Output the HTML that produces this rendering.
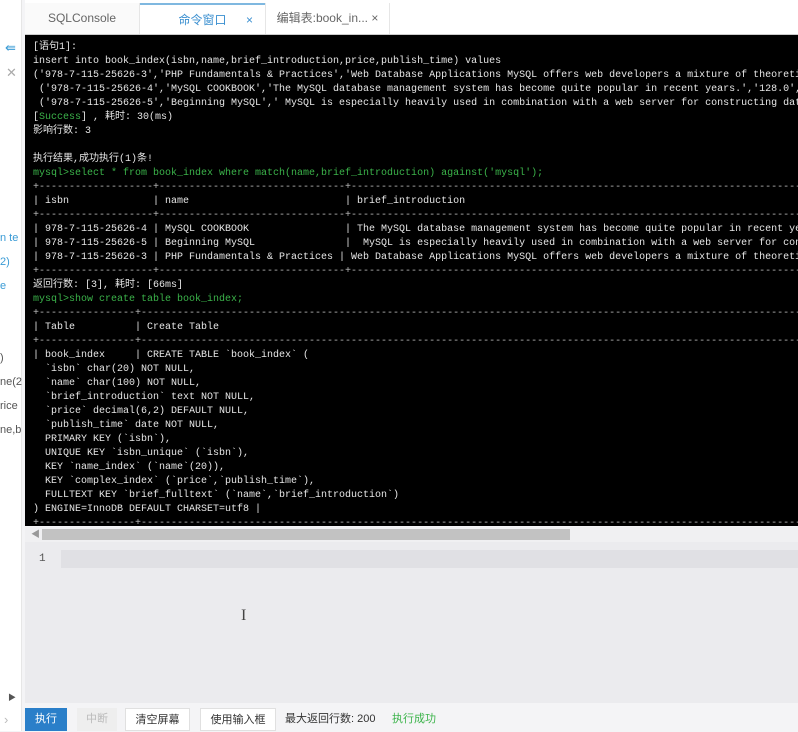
<!DOCTYPE html>
<html><head><meta charset="utf-8"><style>
*{margin:0;padding:0;box-sizing:border-box}
body{width:798px;height:731px;overflow:hidden;background:#f4f4f6;font-family:"Liberation Sans","Noto Sans CJK SC",sans-serif;position:relative}
.side{position:absolute;left:0;top:0;width:22px;height:731px;background:#fff;border-right:1px solid #e6e6e6}
.side div{position:absolute;font-size:11px;white-space:nowrap;overflow:hidden}
.tabs{position:absolute;left:25px;top:0;width:773px;height:35px;background:#fff;border-bottom:1px solid #ccc}
.tab{position:absolute;top:3px;height:31px;font-size:12px;line-height:31px;color:#666;text-align:center}
.term{position:absolute;left:25px;top:35px;width:773px;height:491px;background:#000;color:#e6e6e6;font-family:"Liberation Mono","Noto Sans CJK SC",monospace;font-size:10px;line-height:14px;padding:6px 0 0 8px;white-space:pre;overflow:hidden}
.g{color:#3bb34a}
.sep{color:#bbb}
.sb{position:absolute;left:25px;top:527px;width:773px;height:15px;background:#f0f0f2}
.thumb{position:absolute;left:17px;top:2px;width:528px;height:11px;background:#c2c2c2}
.ed{position:absolute;left:25px;top:542px;width:773px;height:161px;background:#ebebee}
.line{position:absolute;left:36px;top:8px;width:737px;height:18px;background:#e0e0e4}
.bar{position:absolute;left:25px;top:703px;width:773px;height:28px;background:#f4f4f6}
.btn{position:absolute;top:5px;height:23px;font-size:11px;line-height:23px;text-align:center;color:#333}
</style></head><body>
<div class="side">
<div style="left:5px;top:40px;color:#3a9bd5;font-size:13px">⇚</div>
<div style="left:6px;top:65px;color:#aaa;font-size:13px">✕</div>
<div style="left:0;top:232px;color:#3a9bd5;width:22px">n te</div>
<div style="left:0;top:256px;color:#3a9bd5;width:22px">2)</div>
<div style="left:0;top:280px;color:#3a9bd5;width:22px">e</div>
<div style="left:0;top:352px;color:#555;width:22px">)</div>
<div style="left:0;top:376px;color:#555;width:22px">ne(2</div>
<div style="left:0;top:400px;color:#555;width:22px">rice</div>
<div style="left:0;top:424px;color:#555;width:22px">ne,b</div>
<div style="left:8px;top:692px;color:#555;font-size:8px">▶</div>
<div style="left:4px;top:712px;color:#bbb;font-size:13px">›</div>
</div>
<div class="tabs">
<div class="tab" style="left:0;width:115px;background:#fafafa;border-right:1px solid #e6e6e6">SQLConsole</div>
<div class="tab" style="left:115px;width:125px;background:#fff;border-top:2px solid #7fb8e0;color:#3a8fd0">命令窗口<span style="position:absolute;right:12px;color:#3a8fd0">×</span></div>
<div class="tab" style="left:240px;width:125px;border-right:1px solid #e6e6e6;border-left:1px solid #e6e6e6">编辑表:book_in... <span style="color:#666">×</span></div>
</div>
<div class="term">[语句1]:
insert into book_index(isbn,name,brief_introduction,price,publish_time) values
('978-7-115-25626-3','PHP Fundamentals &amp; Practices','Web Database Applications MySQL offers web developers a mixture of theoretical
 ('978-7-115-25626-4','MySQL COOKBOOK','The MySQL database management system has become quite popular in recent years.','128.0',
 ('978-7-115-25626-5','Beginning MySQL',' MySQL is especially heavily used in combination with a web server for constructing dat
[<span class="g">Success</span>] , 耗时: 30(ms)
影响行数: 3

执行结果,成功执行(1)条!
<span class="g">mysql&gt;select * from book_index where match(name,brief_introduction) against('mysql');</span>
<span class="sep">+-------------------+-------------------------------+---------------------------------------------------------------------------</span>
| isbn              | name                          | brief_introduction
<span class="sep">+-------------------+-------------------------------+---------------------------------------------------------------------------</span>
| 978-7-115-25626-4 | MySQL COOKBOOK                | The MySQL database management system has become quite popular in recent yea
| 978-7-115-25626-5 | Beginning MySQL               |  MySQL is especially heavily used in combination with a web server for cons
| 978-7-115-25626-3 | PHP Fundamentals &amp; Practices | Web Database Applications MySQL offers web developers a mixture of theoreti
<span class="sep">+-------------------+-------------------------------+---------------------------------------------------------------------------</span>
返回行数: [3], 耗时: [66ms]
<span class="g">mysql&gt;show create table book_index;</span>
<span class="sep">+----------------+-----------------------------------------------------------------------------------------------------------------</span>
| Table          | Create Table
<span class="sep">+----------------+-----------------------------------------------------------------------------------------------------------------</span>
| book_index     | CREATE TABLE `book_index` (
  `isbn` char(20) NOT NULL,
  `name` char(100) NOT NULL,
  `brief_introduction` text NOT NULL,
  `price` decimal(6,2) DEFAULT NULL,
  `publish_time` date NOT NULL,
  PRIMARY KEY (`isbn`),
  UNIQUE KEY `isbn_unique` (`isbn`),
  KEY `name_index` (`name`(20)),
  KEY `complex_index` (`price`,`publish_time`),
  FULLTEXT KEY `brief_fulltext` (`name`,`brief_introduction`)
) ENGINE=InnoDB DEFAULT CHARSET=utf8 |
<span class="sep">+----------------+-----------------------------------------------------------------------------------------------------------------</span></div>
<div class="sb"><span style="position:absolute;left:6px;top:0;font-size:9px;color:#999">◀</span><div class="thumb"></div></div>
<div class="ed"><div style="position:absolute;left:14px;top:11px;font-family:'Liberation Mono',monospace;font-size:11px;color:#555">1</div><div class="line"></div>
<div style="position:absolute;left:216px;top:65px;font-size:16px;color:#444;font-family:'Liberation Serif',serif">I</div></div>
<div class="bar">
<div class="btn" style="left:0;width:42px;background:#2a7fc9;color:#fff">执行</div>
<div class="btn" style="left:52px;width:40px;background:#eee;color:#bbb">中断</div>
<div class="btn" style="left:100px;width:65px;background:#fff;border:1px solid #e0e0e0">清空屏幕</div>
<div class="btn" style="left:175px;width:76px;background:#fff;border:1px solid #e0e0e0">使用输入框</div>
<div class="btn" style="left:260px;color:#333">最大返回行数: 200</div>
<div class="btn" style="left:367px;color:#3bb34a">执行成功</div>
</div>
</body></html>
